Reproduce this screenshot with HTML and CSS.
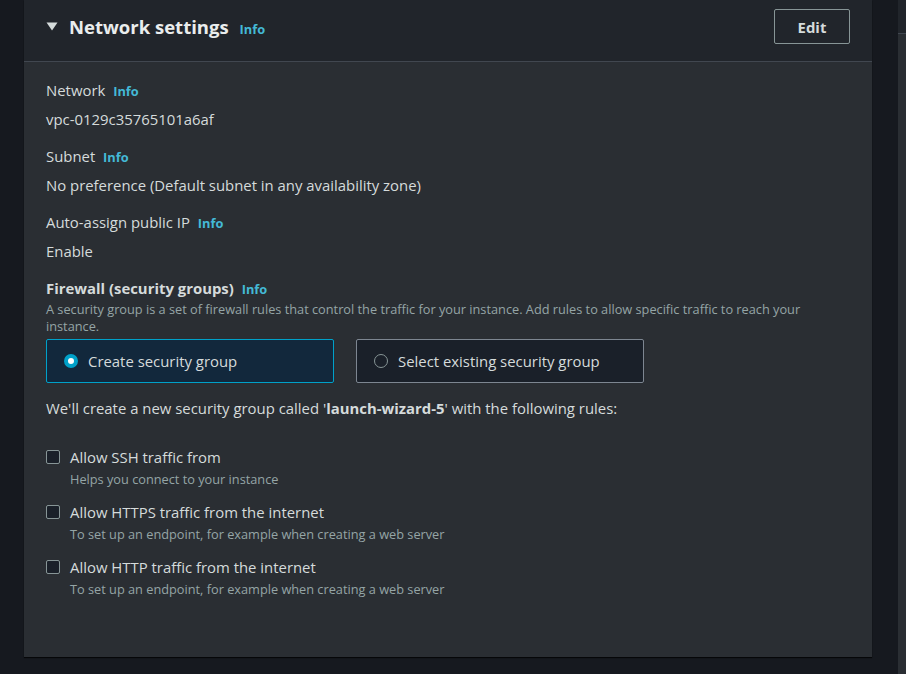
FILE: index.html
```html
<!DOCTYPE html>
<html lang="en">
<head>
<meta charset="utf-8">
<title>Network settings</title>
<link rel="stylesheet" href="styles.css">
</head>
<body>
<div class="layout">
  <main class="main">
    <section class="card">
      <header class="card-header">
        <div class="title-wrap">
          <svg class="caret" width="12" height="9" viewBox="0 0 12 9" aria-hidden="true"><path d="M0.5 0.5 H11.5 L6 8.5 Z" fill="#d5dbdb"/></svg>
          <h2 class="title">Network settings</h2>
          <a class="info info-title">Info</a>
        </div>
        <button class="btn">Edit</button>
      </header>
      <div class="card-body">
        <div class="field">
          <div class="label">Network <a class="info">Info</a></div>
          <div class="value">vpc-0129c35765101a6af</div>
        </div>
        <div class="field">
          <div class="label">Subnet <a class="info">Info</a></div>
          <div class="value">No preference (Default subnet in any availability zone)</div>
        </div>
        <div class="field">
          <div class="label">Auto-assign public IP <a class="info">Info</a></div>
          <div class="value">Enable</div>
        </div>
        <div class="field firewall">
          <div class="label strong">Firewall (security groups) <a class="info">Info</a></div>
          <p class="desc">A security group is a set of firewall rules that control the traffic for your instance. Add rules to allow specific traffic to reach your instance.</p>
          <div class="tiles">
            <div class="tile selected"><span class="radio on"></span><span>Create security group</span></div>
            <div class="tile"><span class="radio"></span><span>Select existing security group</span></div>
          </div>
        </div>
        <p class="note">We'll create a new security group called '<b>launch-wizard-5</b>' with the following rules:</p>
        <ul class="checks">
          <li class="check"><span class="box"></span><div><div class="check-label">Allow SSH traffic from</div><div class="check-desc">Helps you connect to your instance</div></div></li>
          <li class="check"><span class="box"></span><div><div class="check-label">Allow HTTPS traffic from the internet</div><div class="check-desc">To set up an endpoint, for example when creating a web server</div></div></li>
          <li class="check"><span class="box"></span><div><div class="check-label">Allow HTTP traffic from the internet</div><div class="check-desc">To set up an endpoint, for example when creating a web server</div></div></li>
        </ul>
      </div>
    </section>
  </main>
  <aside class="side"><div class="side-head"></div><div class="side-body"></div></aside>
</div>
</body>
</html>
```
FILE: styles.css
```css
html, body {
  margin: 0;
  padding: 0;
}
body {
  background: #16191f;
  font-family: "Open Sans", "Noto Sans", sans-serif;
  color: #d5dbdb;
  font-size: 14.9px;
  height: 674px;
  overflow: hidden;
}
.layout {
  display: flex;
  padding-left: 24px;
  height: 674px;
}
.main {
  width: 848px;
  flex: none;
}
.card {
  background: #2a2e33;
  box-shadow: 0 1px 1px rgba(0, 0, 0, 0.7);
}
.card-header {
  display: flex;
  align-items: center;
  justify-content: space-between;
  padding: 9px 22px 17px 22px;
  background: #21252b;
  border-bottom: 1px solid #414750;
}
.title-wrap {
  display: flex;
  align-items: baseline;
}
.caret {
  align-self: center;
  margin-right: 11px;
  margin-top: -1px;
}
.title {
  margin: 0;
  font-size: 18.5px;
  font-weight: 700;
  line-height: 24px;
  color: #eaeded;
}
.info {
  color: #44b9d6;
  font-weight: 700;
  font-size: 12.8px;
  margin-left: 4px;
}
.info-title {
  margin-left: 11px;
}
.btn {
  width: 76px;
  height: 35px;
  background: transparent;
  border: 1px solid #879596;
  border-radius: 2px;
  color: #d5dbdb;
  font-family: inherit;
  font-size: 14.9px;
  font-weight: 700;
  padding: 0;
}
.card-body {
  padding: 17px 22px 0 22px;
  height: 578px;
}
.field {
  margin-bottom: 15px;
}
.label {
  line-height: 22px;
}
.strong {
  font-weight: 700;
}
.value {
  line-height: 22px;
  margin-top: 6px;
}
.desc {
  margin: 1px 0 0 0;
  font-size: 12.75px;
  line-height: 17px;
  color: #95a5a6;
}
.tiles {
  display: flex;
  gap: 22px;
  margin-top: 4px;
}
.tile {
  width: 269px;
  height: 42px;
  display: flex;
  align-items: center;
  gap: 10px;
  padding-left: 17px;
  box-sizing: content-box;
  background: #1a2029;
  border: 1px solid #7d8691;
  border-radius: 2px;
}
.tile.selected {
  background: #12283c;
  border-color: #00a1c9;
  width: 269px;
}
.radio {
  width: 14px;
  height: 14px;
  box-sizing: border-box;
  border-radius: 50%;
  border: 1.5px solid #879596;
  flex: none;
}
.radio.on {
  border: 4px solid #00a1c9;
  background: #ffffff;
}
.firewall {
  margin-bottom: 14px;
}
.note {
  margin: 0 0 27px 0;
  line-height: 22px;
}
.checks {
  list-style: none;
  margin: 0;
  padding: 0;
}
.check {
  display: flex;
  gap: 10px;
  margin-bottom: 14px;
}
.box {
  width: 14px;
  height: 14px;
  box-sizing: border-box;
  margin-top: 4px;
  border: 1px solid #879596;
  border-radius: 2px;
  background: #1a2029;
  flex: none;
}
.check-label {
  line-height: 22px;
}
.check-desc {
  font-size: 12.75px;
  line-height: 16px;
  margin-top: 3px;
  color: #95a5a6;
}
.side {
  margin-left: 26px;
  flex: 1;
  background: #2a2e33;
}
.side-head {
  height: 33px;
  background: #21252b;
  border-bottom: 1px solid #414750;
}
```
